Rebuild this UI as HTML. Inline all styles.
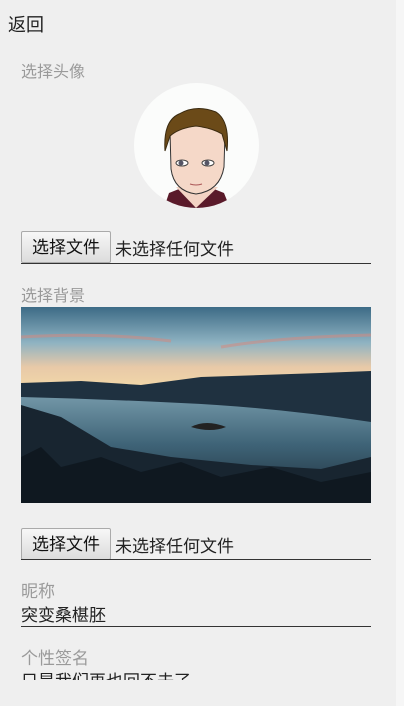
<!DOCTYPE html>
<html><head><meta charset="utf-8"><style>
body{margin:0;width:404px;height:706px;background:#efefef;font-family:"Liberation Sans","Noto Sans CJK SC",sans-serif;position:relative;overflow:hidden}
.a{position:absolute;white-space:nowrap}
.lbl{color:#9a9a9a;font-size:16px;left:21px}
.btn{position:absolute;left:21px;width:88px;height:30px;border:1px solid #aaa;background:linear-gradient(#f7f7f7,#dcdcdc);font-size:17px;line-height:32px;text-align:center;color:#111;border-radius:2px}
.line{position:absolute;left:21px;width:350px;height:1px;background:#333}
</style></head><body>
<div style="position:absolute;right:0;top:0;width:8px;height:706px;background:#f6f6f6"></div>
<div class="a" style="left:8px;top:11px;font-size:18px;color:#222">返回</div>
<div class="a lbl" style="top:58px">选择头像</div>
<svg class="a" style="left:134px;top:83px" width="125" height="125" viewBox="0 0 125 125">
<defs><clipPath id="c"><circle cx="62.5" cy="62.5" r="62.5"/></clipPath></defs>
<circle cx="62.5" cy="62.5" r="62.5" fill="#fbfcfb"/>
<g clip-path="url(#c)">
<path d="M30 125 L35 110 L50 104 L75 104 L90 110 L96 125Z" fill="#5a1a2a"/>
<path d="M42 104 L62 125 L84 104Z" fill="#f3d3c4"/>
<path d="M36 48 Q36 30 62 28 Q90 30 91 50 L90 84 Q86 108 62 111 Q40 108 37 86Z" fill="#f5d8c8" stroke="#333" stroke-width="1"/>
<path d="M31 68 Q29 38 45 31 Q62 21 82 29 Q96 38 93 68 L88 51 Q78 45 62 43 Q45 45 36 53Z" fill="#6b4a18" stroke="#3a2a10" stroke-width="1"/>
<ellipse cx="48" cy="80" rx="6" ry="3" fill="#fff" stroke="#444"/><circle cx="47" cy="80" r="2.5" fill="#556"/>
<ellipse cx="74" cy="80" rx="6" ry="3" fill="#fff" stroke="#444"/><circle cx="73" cy="80" r="2.5" fill="#556"/>
<path d="M56 101 Q62 103 68 101" stroke="#a55" fill="none"/>
</g></svg>
<div class="btn" style="top:231px">选择文件</div>
<div class="a" style="left:115px;top:235px;font-size:17px;color:#222">未选择任何文件</div>
<div class="line" style="top:263px"></div>
<div class="a lbl" style="top:282px">选择背景</div>
<svg class="a" style="left:21px;top:307px" width="350" height="196" viewBox="0 0 350 196">
<defs>
<linearGradient id="s" x1="0" y1="0" x2="0" y2="1"><stop offset="0" stop-color="#3d6b86"/><stop offset=".45" stop-color="#8fb3c2"/><stop offset=".75" stop-color="#e8c9a8"/><stop offset="1" stop-color="#f1d7a8"/></linearGradient>
<linearGradient id="w" x1="0" y1="0" x2="0" y2="1"><stop offset="0" stop-color="#7fa3b3"/><stop offset=".5" stop-color="#3f6478"/><stop offset="1" stop-color="#1c2b36"/></linearGradient>
</defs>
<rect width="350" height="80" fill="url(#s)"/>
<path d="M0 30 Q80 25 150 34 M200 40 Q260 30 350 28" stroke="#d9867a" stroke-width="3" opacity=".5" fill="none"/>
<rect y="78" width="350" height="118" fill="url(#w)"/>
<path d="M0 76 L60 74 L120 78 L180 70 L240 68 L300 66 L350 64 L350 115 Q250 100 160 96 Q80 92 0 90Z" fill="#1f3140"/>
<path d="M170 120 Q185 112 205 120 Q190 126 170 120Z" fill="#222"/>
<path d="M0 98 L40 110 L90 140 L150 150 L230 158 L300 162 L350 150 L350 196 L0 196Z" fill="#182530"/>
<path d="M0 150 L20 140 L40 160 L80 150 L120 165 L160 155 L200 170 L250 160 L300 175 L350 165 L350 196 L0 196Z" fill="#0f1820"/>
</svg>
<div class="btn" style="top:528px">选择文件</div>
<div class="a" style="left:115px;top:532px;font-size:17px;color:#222">未选择任何文件</div>
<div class="line" style="top:559px"></div>
<div class="a lbl" style="top:577px;font-size:17px">昵称</div>
<div class="a" style="left:21px;top:601px;font-size:17px;color:#222">突变桑椹胚</div>
<div class="line" style="top:626px"></div>
<div class="a lbl" style="top:644px;font-size:17px">个性签名</div>
<div class="a" style="left:21px;top:671px;height:9px;overflow:hidden;font-size:17px;color:#222;line-height:22px">只是我们再也回不去了</div>
</body></html>
